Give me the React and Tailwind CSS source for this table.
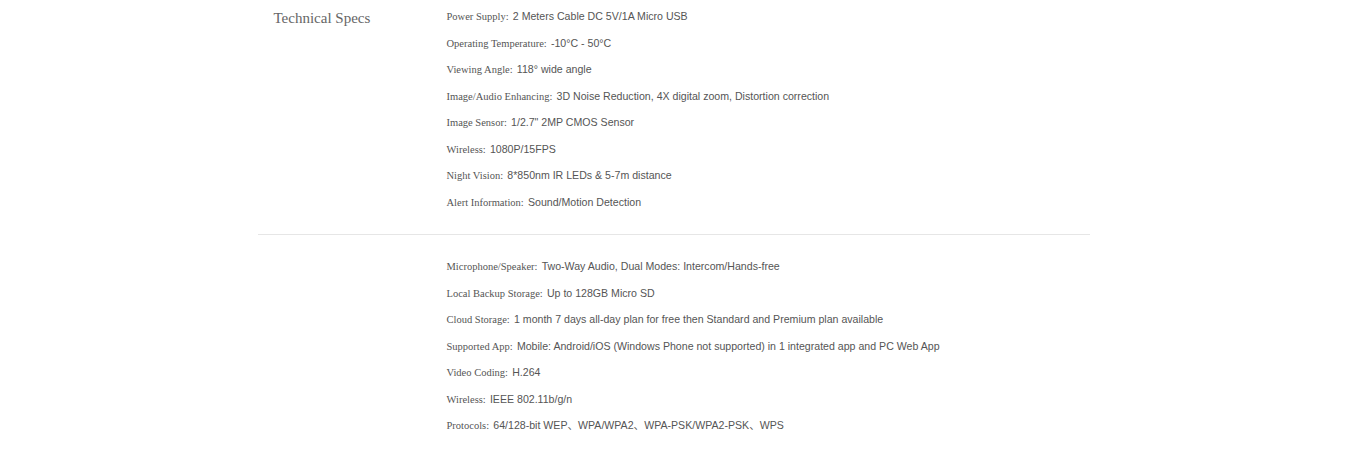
const group1 = [
  ["Power Supply:", "2 Meters Cable DC 5V/1A Micro USB"],
  ["Operating Temperature:", "-10°C - 50°C"],
  ["Viewing Angle:", "118° wide angle"],
  ["Image/Audio Enhancing:", "3D Noise Reduction, 4X digital zoom, Distortion correction"],
  ["Image Sensor:", "1/2.7\" 2MP CMOS Sensor"],
  ["Wireless:", "1080P/15FPS"],
  ["Night Vision:", "8*850nm IR LEDs & 5-7m distance"],
  ["Alert Information:", "Sound/Motion Detection"],
];
const group2 = [
  ["Microphone/Speaker:", "Two-Way Audio, Dual Modes: Intercom/Hands-free"],
  ["Local Backup Storage:", "Up to 128GB Micro SD"],
  ["Cloud Storage:", "1 month 7 days all-day plan for free then Standard and Premium plan available"],
  ["Supported App:", "Mobile: Android/iOS (Windows Phone not supported) in 1 integrated app and PC Web App"],
  ["Video Coding:", "H.264"],
  ["Wireless:", "IEEE 802.11b/g/n"],
  ["Protocols:", "64/128-bit WEP、WPA/WPA2、WPA-PSK/WPA2-PSK、WPS"],
];

function Line({ label, value }) {
  return (
    <div className="h-[26.5px] leading-[26.5px] whitespace-nowrap text-[#555]">
      <span className="font-['Liberation_Serif',serif] text-[10.5px]">{label}</span>{" "}
      <span className="font-['Liberation_Sans','Noto_Sans_CJK_SC',sans-serif] text-[10.6px]">{value}</span>
    </div>
  );
}

export default function App() {
  return (
    <div className="w-full h-[449px] bg-white overflow-hidden">
      <div className="w-[832px] mx-auto">
        <div className="flex pt-[1px] pb-[21px] border-b border-[#e6e6e6]">
          <div className="w-[189px] pl-4 mt-[2px] font-['Liberation_Serif',serif] text-[15px] text-[#666] leading-[30px]">
            Technical Specs
          </div>
          <div className="flex-1">
            {group1.map(([l, v], i) => (
              <Line key={i} label={l} value={v} />
            ))}
          </div>
        </div>
        <div className="flex pt-[16px]">
          <div className="w-[189px]" />
          <div className="flex-1">
            {group2.map(([l, v], i) => (
              <Line key={i} label={l} value={v} />
            ))}
          </div>
        </div>
      </div>
    </div>
  );
}
